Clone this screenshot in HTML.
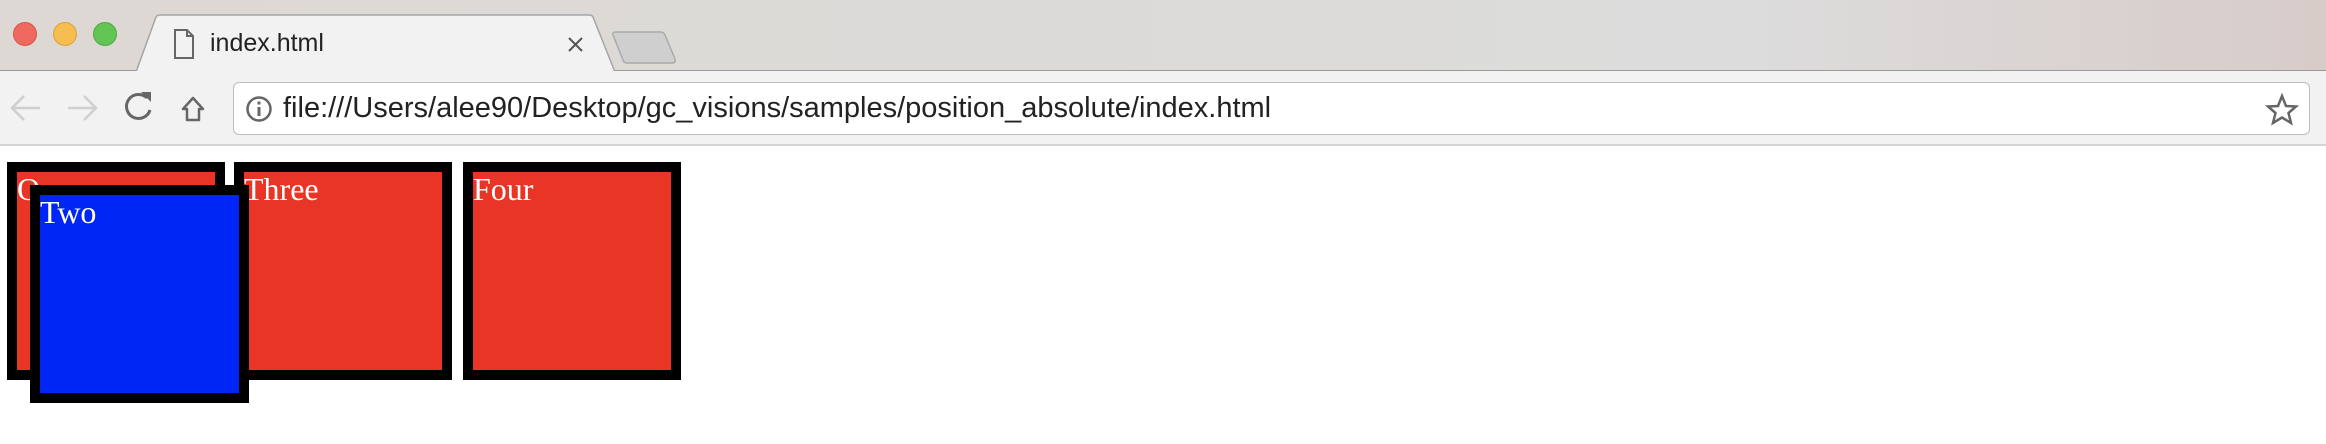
<!DOCTYPE html>
<html><head><meta charset="utf-8"><style>
*{margin:0;padding:0;box-sizing:border-box}
body{width:2326px;height:444px;overflow:hidden;background:#fff;position:relative;font-family:"Liberation Sans",sans-serif}
.tabbar{position:absolute;left:0;top:0;width:2326px;height:71px;background:linear-gradient(90deg,#ddd8d3 0%,#dcdcdc 75%,#d8ccc9 100%);border-bottom:1px solid #9a9a9a}
.dot{position:absolute;top:22px;width:24px;height:24px;border-radius:50%}
.toolbar{position:absolute;left:0;top:71px;width:2326px;height:75px;background:#f2f2f2;border-bottom:2px solid #d2d2d2}
.addr{position:absolute;left:233px;top:11px;width:2077px;height:53px;background:#fff;border:1.5px solid #bdbdbd;border-radius:6px}
.box{position:absolute;border:10px solid #000;background:#e93525;color:#fff;font-family:"Liberation Serif",serif;font-size:32px;line-height:34px}
</style></head><body>
<div class="tabbar">
 <div class="dot" style="left:13px;background:#ee6a5f;border:1px solid #d9534a"></div>
 <div class="dot" style="left:53px;background:#f6be4f;border:1px solid #dba33b"></div>
 <div class="dot" style="left:93px;background:#62c554;border:1px solid #4eaa42"></div>
 <svg style="position:absolute;left:0;top:0" width="700" height="72">
  <path d="M136 72 L156 17 Q157 15 160 15 L589 15 Q592 15 593 17 L615 72 Z" fill="#f2f2f2" stroke="#a5a5a5" stroke-width="1.5"/>
  <path d="M616 32 L660 32 Q664 32 665 35 L675 59 Q676 63 672 63 L627 63 Q624 63 623 60 L613 35 Q612 32 616 32Z" fill="#cfcfcf" stroke="#aaa" stroke-width="1.5"/>
  <path d="M175 30 L187 30 L193 36 L193 58 L175 58 Z M187 30 L187 36 L193 36" fill="none" stroke="#666" stroke-width="2"/>
  <path d="M569 38 L582 51 M582 38 L569 51" stroke="#555" stroke-width="2"/>
 </svg>
 <div style="position:absolute;left:210px;top:29px;font-size:25px;color:#222">index.html</div>
</div>
<div class="toolbar">
 <svg style="position:absolute;left:0;top:0" width="230" height="75">
  <path d="M12 37 L40 37 M24 25 L12 37 L24 49" fill="none" stroke="#cfcfcf" stroke-width="2.5"/>
  <path d="M68 37 L96 37 M84 25 L96 37 L84 49" fill="none" stroke="#cfcfcf" stroke-width="2.5"/>
  <path d="M147 27 A12 12 0 1 0 150 39" fill="none" stroke="#666" stroke-width="3"/>
  <path d="M141 21 L151 21 L151 31 Z" fill="#666"/>
  <path d="M183 38 L193 27 L203 38 L199 38 L199 49 L187 49 L187 38 Z" fill="none" stroke="#666" stroke-width="2.5" stroke-linejoin="round"/>
 </svg>
 <div class="addr">
  <svg style="position:absolute;left:12px;top:12px" width="28" height="28"><circle cx="13" cy="14" r="11.5" fill="none" stroke="#666" stroke-width="2.5"/><rect x="11.5" y="12" width="3" height="9" fill="#666"/><rect x="11.5" y="6.5" width="3" height="3" fill="#666"/></svg>
  <div style="position:absolute;left:49px;top:9px;font-size:29px;color:#222;white-space:nowrap">file:///Users/alee90/Desktop/gc_visions/samples/position_absolute/index.html</div>
  <svg style="position:absolute;right:10px;top:10px" width="34" height="34"><path d="M17 3 L21 13 L31 13.5 L23.5 20 L26 30 L17 24.5 L8 30 L10.5 20 L3 13.5 L13 13 Z" fill="none" stroke="#666" stroke-width="2.5"/></svg>
 </div>
</div>
<div class="box" style="left:7px;top:162px;width:218px;height:218px">One</div>
<div class="box" style="left:234px;top:162px;width:218px;height:218px">Three</div>
<div class="box" style="left:463px;top:162px;width:218px;height:218px">Four</div>
<div class="box" style="left:30px;top:185px;width:219px;height:218px;background:#0026f5">Two</div>
</body></html>
